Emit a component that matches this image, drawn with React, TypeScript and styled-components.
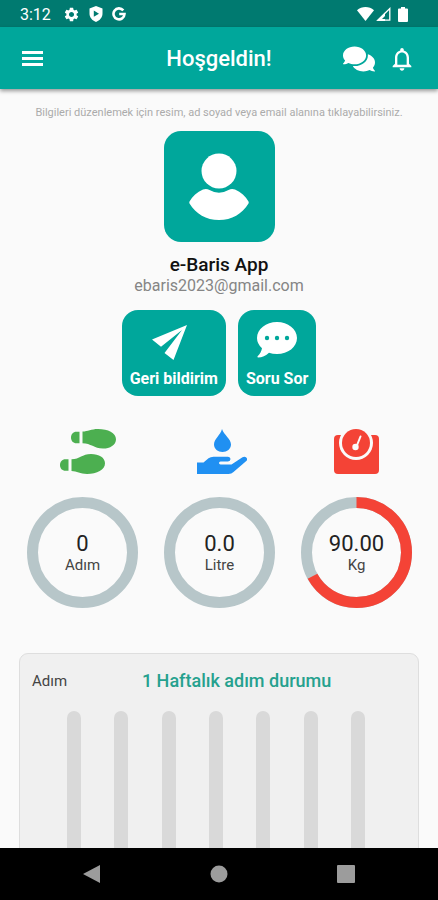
import React from "react";
import styled, { createGlobalStyle } from "styled-components";
import { MdNotificationsNone, MdSettings } from "react-icons/md";
import { FaComments } from "react-icons/fa";

const teal = "#00a79b";
const surface = "#fafafa";

const GlobalStyle = createGlobalStyle`
  * { box-sizing: border-box; }
  body { margin: 0; background: ${surface}; color: #1c1c1c; font-family: Roboto, sans-serif; }
  button { border: 0; padding: 0; background: none; color: inherit; font: inherit; cursor: pointer; }
  svg { display: block; }
`;

const Screen = styled.div`
  display: flex;
  flex-direction: column;
  height: 100vh;
`;

const StatusBar = styled.div`
  flex: none;
  display: flex;
  align-items: center;
  justify-content: space-between;
  height: 27px;
  padding: 1px 30px 0 20px;
  background: #007a70;
  color: #fff;
  font-size: 16px;
`;

const StatusGroup = styled.div<{ $gap: number }>`
  display: flex;
  align-items: center;
  gap: ${(p) => p.$gap}px;
`;

const Clock = styled.time`
  margin-right: 3px;
`;

const AppBar = styled.header`
  flex: none;
  display: grid;
  grid-template-columns: 1fr auto 1fr;
  align-items: center;
  height: 62px;
  padding: 1px 22px 0;
  background: ${teal};
  color: #fff;
  box-shadow: 0 2px 4px rgba(0, 0, 0, 0.4);
  z-index: 1;
`;

const Title = styled.h1`
  margin: 0;
  font-size: 22px;
  line-height: 27px;
  font-weight: 500;
`;

const Actions = styled.div`
  display: flex;
  align-items: center;
  justify-content: flex-end;
  gap: 13px;
`;

const IconButton = styled.button`
  display: grid;
  place-items: center;
  justify-self: start;
`;

const Content = styled.main`
  flex: 1;
  min-height: 0;
  overflow-y: auto;
  scrollbar-width: none;
  display: flex;
  flex-direction: column;
`;

const Hint = styled.p`
  margin: 17px 0 11px;
  text-align: center;
  font-size: 11px;
  line-height: 14px;
  color: #ababab;
`;

const Profile = styled.section`
  display: flex;
  flex-direction: column;
  align-items: center;
`;

const Avatar = styled.button`
  display: grid;
  place-items: center;
  width: 111px;
  height: 111px;
  border-radius: 17px;
  background: ${teal};
`;

const Name = styled.h2`
  margin: 12px 0 0;
  font-size: 19px;
  line-height: 22px;
  font-weight: 500;
  color: #111;
`;

const Email = styled.p`
  margin: 0;
  font-size: 16px;
  line-height: 20px;
  color: #858585;
`;

const Shortcuts = styled.div`
  display: flex;
  justify-content: center;
  gap: 12px;
  margin-top: 14px;
`;

const Shortcut = styled.button`
  display: flex;
  flex-direction: column;
  align-items: center;
  justify-content: space-between;
  height: 86px;
  padding: 12px 8px 7px;
  border-radius: 16px;
  background: ${teal};
  color: #fff;
  font-size: 16px;
  line-height: 20px;
  font-weight: 700;
`;

const ShortcutIcon = styled.span`
  display: grid;
  place-items: center;
  height: 40px;
`;

const Metrics = styled.section`
  display: grid;
  grid-template-columns: repeat(3, 1fr);
  padding: 33px 13px 0 14px;
`;

const Metric = styled.div`
  display: flex;
  flex-direction: column;
  align-items: center;
  gap: 22px;
`;

const MetricIcon = styled.div<{ $color: string }>`
  display: grid;
  place-items: center;
  height: 46px;
  color: ${(p) => p.$color};
`;

const Gauge = styled.div`
  display: grid;
  place-items: center;
  > * { grid-area: 1 / 1; }
`;

const Reading = styled.div`
  display: flex;
  flex-direction: column;
  align-items: center;
  padding-top: 3px;
`;

const Value = styled.span`
  font-size: 22px;
  line-height: 22px;
  color: #222;
`;

const Unit = styled.span`
  font-size: 15px;
  line-height: 20px;
  color: #444;
`;

const ChartCard = styled.section`
  flex: none;
  margin: 45px 19px 20px;
  padding: 17px 12px 20px;
  border: 1px solid #dedede;
  border-radius: 9px;
  background: #f0f0f0;
`;

const ChartHead = styled.div`
  display: flex;
  align-items: center;
  height: 20px;
`;

const AxisLabel = styled.span`
  font-size: 15px;
  color: #444;
`;

const ChartTitle = styled.h3`
  flex: 1;
  margin: 0;
  text-align: center;
  font-size: 18px;
  line-height: 20px;
  font-weight: 500;
  color: #25a18e;
`;

const Bars = styled.div`
  display: grid;
  grid-template-columns: repeat(7, 1fr);
  justify-items: center;
  margin: 20px 24px 0 18px;
`;

const Bar = styled.div`
  width: 14px;
  height: 200px;
  border-radius: 7px;
  background: #d9d9d9;
`;

const NavBar = styled.nav`
  flex: none;
  display: flex;
  align-items: center;
  justify-content: space-between;
  height: 52px;
  padding: 0 83px;
  background: #000;
`;

const ShieldIcon = () => (
  <svg width="14" height="16" viewBox="0 0 14 16" aria-hidden="true">
    <path fill="#fff" fillRule="evenodd" d="M7 0l6.500 2.400v5.200c0 3.800-2.600 7-6.500 8.400C3.100 14.600.5 11.400.5 7.600V2.400zM4.800 4.600v6.200L10 7.700z" />
  </svg>
);

const LetterIcon = () => (
  <svg width="14" height="14" viewBox="0 0 14 14" aria-hidden="true">
    <path fill="none" stroke="#fff" strokeWidth="2.600" d="M11.300 3.400A5.500 5.500 0 1 0 12.500 7H7.200" />
  </svg>
);

const WifiIcon = () => (
  <svg width="17" height="14" viewBox="0 0 17 14" aria-hidden="true">
    <path fill="#fff" d="M0 3.200C4.800-1 12.200-1 17 3.200L8.500 14z" />
  </svg>
);

const SignalIcon = () => (
  <svg width="15" height="14" viewBox="0 0 15 14" aria-hidden="true">
    <path fill="none" stroke="#fff" strokeWidth="1.300" d="M1.800 13.200L13.800 1.600v11.600z" />
    <path fill="#fff" d="M.5 14L9 5.600V14z" />
    <path fill="#007a70" d="M6 12l3-3v3z" />
  </svg>
);

const BatteryIcon = styled.svg.attrs({
  width: 10,
  height: 15,
  viewBox: "0 0 10 15",
  children: <path fill="#fff" d="M3 0h4v1.500h2q1 0 1 1V14q0 1-1 1H1q-1 0-1-1V2.500q0-1 1-1h2z" />,
})`
  margin-left: 5px;
`;

const MenuIcon = () => (
  <svg width="21" height="15" viewBox="0 0 21 15" fill="currentColor" aria-hidden="true">
    <path d="M0 0h21v3H0zM0 6h21v3H0zM0 12h21v3H0z" />
  </svg>
);

const PersonIcon = () => (
  <svg width="60" height="68" viewBox="0 0 60 68" fill="#fff" aria-hidden="true">
    <circle cx="30" cy="18" r="17.500" />
    <path d="M14 36.500Q17.500 35.300 20.500 37Q30 42.500 39.500 37Q42.500 35.300 46 36.500C52 39 56.500 43.500 59.500 48.500Q60 49.500 59.500 50.500C53 61 43 67 30 67S7 61 .5 50.500Q0 49.500 .5 48.500C3.500 43.500 8 39 14 36.500z" />
  </svg>
);

const PlaneIcon = () => (
  <svg width="43" height="35" viewBox="0 0 43 35" fill="#fff" aria-hidden="true">
    <path d="M35 0L0 14.500L9 21.800L30 5L12.500 28L21.500 35z" />
  </svg>
);

const BubbleIcon = () => (
  <svg width="40" height="36" viewBox="0 0 40 36" aria-hidden="true">
    <path fill="#fff" d="M20 0C31 0 40 7 40 16S31 32 20 32Q15.500 32 12 30.800C9 33.800 5 35.600 1 35.600Q0 35.200.6 34.200C3 32 4.600 29 5 26.200Q0 21.800 0 16C0 7 9 0 20 0z" />
    <g fill={teal}>
      <circle cx="10" cy="16" r="2.200" />
      <circle cx="20" cy="16" r="2.200" />
      <circle cx="30" cy="16" r="2.200" />
    </g>
  </svg>
);

const StepsIcon = () => (
  <svg width="66" height="46" viewBox="-10 0 66 46" fill="currentColor" aria-hidden="true">
    <path d="M19.500 2.700v11.600H16.500C13 14.300 11 11.800 11 8.500S13 2.700 16.500 2.700z" />
    <path d="M22.500 2.500C28 2.500 31 0 38 0C48 0 56 4 56 10.200C56 16 50 19.500 43 19.500C34 19.500 31 14.300 22.500 14.300z" />
    <path d="M8.500 30.200v11.600H5.500C2 41.800 0 39.300 0 36S2 30.200 5.500 30.200z" />
    <path d="M11.500 30.200C20 30.200 22 25 31 25C39 25 45 28.500 45 34.300C45 41 37 45 27 45C20 45 17 42 11.500 42z" />
  </svg>
);

const WaterIcon = () => (
  <svg width="54" height="46" viewBox="-4 0 54 46" fill="currentColor" aria-hidden="true">
    <path d="M25 0C27 6 34 10 34 15.500C34 20 30 23 25.500 23S17 20 17 15.500C17 10 23.500 6 25 0z" />
    <path d="M0 33.500H6.500L11.500 29.300Q13.500 27.700 16.500 27.700H31Q33.500 28 33.500 30Q33.500 32.200 31 32.400H23.500Q22 32.600 22 34T23.500 35.500H34.500L45.500 28.200Q48 27 49.500 28.800T49 32.300L36.500 43Q34.500 45 31.500 45H0z" />
  </svg>
);

const ScaleIcon = () => (
  <svg width="45" height="46" viewBox="0 0 45 46" fill="currentColor" aria-hidden="true">
    <path d="M4 6H41Q45 6 45 10V41Q45 45 41 45H4Q0 45 0 41V10Q0 6 4 6z" />
    <circle cx="22" cy="14" r="17" fill={surface} />
    <circle cx="22" cy="14" r="14" />
    <path d="M26.500 7.500L22.500 17.500" stroke={surface} strokeWidth="2" strokeLinecap="round" />
    <circle cx="21.500" cy="18" r="3.200" fill={surface} />
  </svg>
);

const Ring = ({ progress }: { progress: number }) => {
  const length = 2 * Math.PI * 50;
  return (
    <svg width="111" height="111" viewBox="0 0 111 111" fill="none" strokeWidth="11" aria-hidden="true">
      <circle cx="55.500" cy="55.500" r="50" stroke="#b7c6c9" />
      {progress > 0 && (
        <circle
          cx="55.500"
          cy="55.500"
          r="50"
          stroke="#f44336"
          strokeDasharray={`${length * progress} ${length}`}
          transform="rotate(-90 55.500 55.500)"
        />
      )}
    </svg>
  );
};

const metrics = [
  { value: "0", unit: "Adım", color: "#4caf50", icon: <StepsIcon />, progress: 0 },
  { value: "0.0", unit: "Litre", color: "#2090f2", icon: <WaterIcon />, progress: 0 },
  { value: "90.00", unit: "Kg", color: "#f44336", icon: <ScaleIcon />, progress: 0.67 },
];

const days = ["Pzt", "Sal", "Çar", "Per", "Cum", "Cmt", "Paz"];

export default function App() {
  return (
    <Screen>
      <GlobalStyle />
      <StatusBar>
        <StatusGroup $gap={9}>
          <Clock>3:12</Clock>
          <MdSettings size={17} />
          <ShieldIcon />
          <LetterIcon />
        </StatusGroup>
        <StatusGroup $gap={2}>
          <WifiIcon />
          <SignalIcon />
          <BatteryIcon />
        </StatusGroup>
      </StatusBar>
      <AppBar>
        <IconButton aria-label="Menü">
          <MenuIcon />
        </IconButton>
        <Title>Hoşgeldin!</Title>
        <Actions>
          <IconButton aria-label="Mesajlar">
            <FaComments size={32} />
          </IconButton>
          <IconButton aria-label="Bildirimler">
            <MdNotificationsNone size={28} />
          </IconButton>
        </Actions>
      </AppBar>
      <Content>
        <Hint>Bilgileri düzenlemek için resim, ad soyad veya email alanına tıklayabilirsiniz.</Hint>
        <Profile>
          <Avatar aria-label="Profil resmi">
            <PersonIcon />
          </Avatar>
          <Name>e-Baris App</Name>
          <Email>ebaris2023@gmail.com</Email>
        </Profile>
        <Shortcuts>
          <Shortcut>
            <ShortcutIcon><PlaneIcon /></ShortcutIcon>
            Geri bildirim
          </Shortcut>
          <Shortcut>
            <BubbleIcon />
            Soru Sor
          </Shortcut>
        </Shortcuts>
        <Metrics>
          {metrics.map((m) => (
            <Metric key={m.unit}>
              <MetricIcon $color={m.color}>{m.icon}</MetricIcon>
              <Gauge>
                <Ring progress={m.progress} />
                <Reading>
                  <Value>{m.value}</Value>
                  <Unit>{m.unit}</Unit>
                </Reading>
              </Gauge>
            </Metric>
          ))}
        </Metrics>
        <ChartCard>
          <ChartHead>
            <AxisLabel>Adım</AxisLabel>
            <ChartTitle>1 Haftalık adım durumu</ChartTitle>
          </ChartHead>
          <Bars>
            {days.map((day) => (
              <Bar key={day} />
            ))}
          </Bars>
        </ChartCard>
      </Content>
      <NavBar>
        <IconButton aria-label="Geri">
          <svg width="18" height="18" viewBox="0 0 18 18" fill="#9c9c9c"><path d="M0 9L17 0v18z" /></svg>
        </IconButton>
        <IconButton aria-label="Ana ekran">
          <svg width="18" height="18" viewBox="0 0 18 18" fill="#9c9c9c"><circle cx="9" cy="9" r="8.500" /></svg>
        </IconButton>
        <IconButton aria-label="Son uygulamalar">
          <svg width="18" height="18" viewBox="0 0 18 18" fill="#9c9c9c"><rect width="18" height="18" rx="1" /></svg>
        </IconButton>
      </NavBar>
    </Screen>
  );
}
